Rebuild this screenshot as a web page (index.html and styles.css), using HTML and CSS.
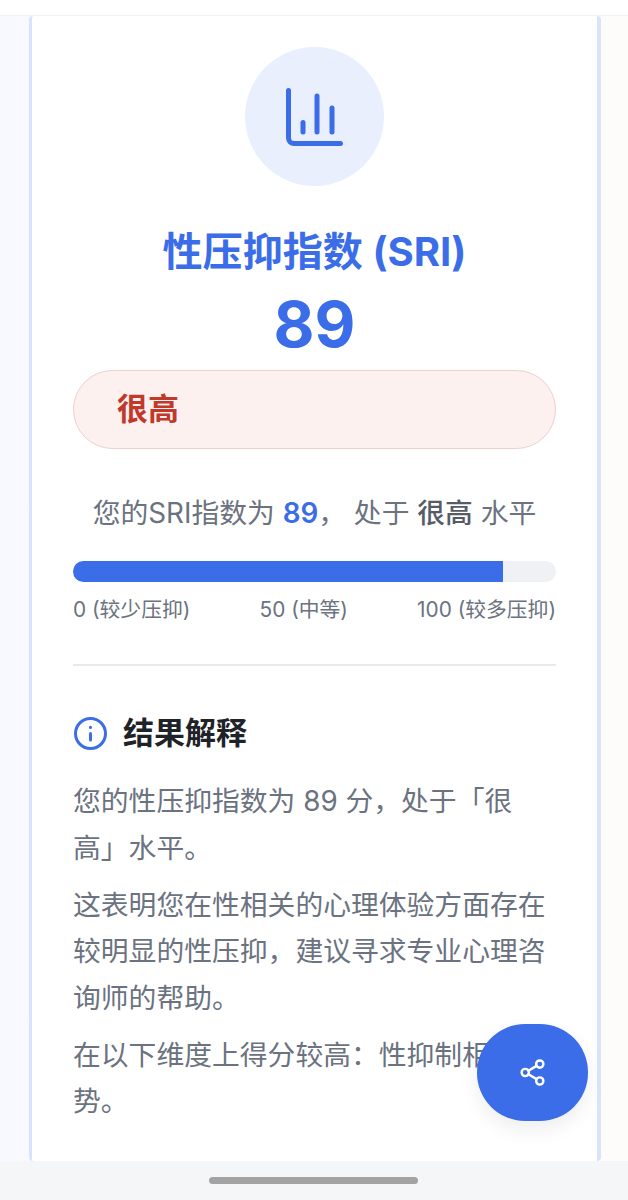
FILE: index.html
```html
<!DOCTYPE html>
<html lang="zh-CN">
<head>
    <title>性压抑指数 (SRI)</title>
    <meta charset="utf-8">
    <meta name="viewport" content="width=device-width, initial-scale=1">
    <link rel="stylesheet" href="styles.css">
</head>
<body>
    <div class="topbar"></div>
    <main class="page">
        <section class="card">
            <div class="score-icon">
                <svg width="64" height="64" viewBox="0 0 64 64" fill="none" stroke="currentColor" stroke-width="5" stroke-linecap="round" stroke-linejoin="round">
                    <path d="M5.5 5.5V53a5.5 5.5 0 0 0 5.5 5.5H57.5"/>
                    <path d="M20 37.5V47"/>
                    <path d="M34 11V47"/>
                    <path d="M49 23V47"/>
                </svg>
            </div>
            <h1 class="score-title">性压抑指数 (SRI)</h1>
            <div class="score-value">89</div>
            <div class="level-pill">很高</div>
            <p class="summary">您的SRI指数为 <span class="hl-num">89</span>， 处于 <strong>很高</strong> 水平</p>
            <div class="track"><div class="fill" style="width: 89%"></div></div>
            <div class="scale">
                <span>0 (较少压抑)</span>
                <span>50 (中等)</span>
                <span>100 (较多压抑)</span>
            </div>
            <hr class="divider">
            <h2 class="section-title">
                <svg width="33" height="33" viewBox="0 0 33 33" fill="none" stroke="currentColor" stroke-width="3" stroke-linecap="round">
                    <circle cx="16.5" cy="16.5" r="15"/>
                    <path d="M16.5 16.5V23"/>
                    <path d="M16.5 10.2V10.4"/>
                </svg>
                <span>结果解释</span>
            </h2>
            <div class="explain">
                <p class="para">您的性压抑指数为 89 分，处于「很高」水平。</p>
                <p class="para">这表明您在性相关的心理体验方面存在较明显的性压抑，建议寻求专业心理咨询师的帮助。</p>
                <p class="para">在以下维度上得分较高：性抑制相关优势。</p>
            </div>
        </section>
    </main>
    <div class="bottombar"><div class="home-bar"></div></div>
    <button class="fab" type="button" aria-label="分享">
        <svg width="29" height="29" viewBox="0 0 24 24" fill="none" stroke="currentColor" stroke-width="2" stroke-linecap="round" stroke-linejoin="round">
            <circle cx="18" cy="5" r="3"/>
            <circle cx="6" cy="12" r="3"/>
            <circle cx="18" cy="19" r="3"/>
            <path d="M8.6 13.5l6.8 4"/>
            <path d="M15.4 6.5l-6.8 4"/>
        </svg>
    </button>
</body>
</html>
```

FILE: styles.css
```css
html, body {
    margin: 0;
    height: 100%;
}
body {
    display: flex;
    flex-direction: column;
    height: 1200px;
    overflow: hidden;
    background: linear-gradient(to right, #f7f9fe, #fefcfa);
    font-family: Inter, "Noto Sans CJK SC", sans-serif;
    color: #6b7280;
}
.topbar {
    height: 15px;
    background: #fff;
    border-bottom: 1px solid #f1f2f5;
}
.page {
    flex: 1;
    min-height: 0;
    overflow: hidden;
    padding: 0 27px 0 29px;
}
.card {
    height: 100%;
    box-sizing: border-box;
    padding: 31px 41px 0;
    background: #fff;
    border-left: 3px solid #d9e3fb;
    border-right: 4px solid #d9e3fb;
    border-radius: 4px;
}
.score-icon {
    width: 139px;
    height: 139px;
    margin: 0 auto;
    display: flex;
    align-items: center;
    justify-content: center;
    border-radius: 50%;
    background: #e9effc;
    color: #3b6de8;
}
.score-title {
    margin: 40px 0 0;
    font-size: 40.1px;
    line-height: 52px;
    font-weight: 700;
    text-align: center;
    color: #3b6de8;
}
.score-value {
    margin-top: 8px;
    font-size: 63px;
    line-height: 76px;
    font-weight: 700;
    text-align: center;
    color: #3b6de8;
}
.level-pill {
    height: 79px;
    box-sizing: border-box;
    margin-top: 8px;
    padding-left: 43px;
    line-height: 75px;
    font-size: 31px;
    font-weight: 600;
    color: #c0392b;
    background: #fdf1f0;
    border: 1px solid #efcfcc;
    border-radius: 40px;
}
.summary {
    margin: 42px 0 0;
    font-size: 27.8px;
    line-height: 44px;
    text-align: center;
    white-space: nowrap;
}
.summary strong {
    font-weight: 500;
    color: #555c68;
}
.hl-num {
    font-weight: 600;
    color: #3b6de8;
}
.track {
    height: 21px;
    margin-top: 26px;
    background: #f0f1f4;
    border-radius: 11px;
    overflow: hidden;
}
.fill {
    height: 100%;
    background: #3b6de8;
}
.scale {
    display: flex;
    justify-content: space-between;
    margin-top: 13px;
    font-size: 20.8px;
    line-height: 30px;
}
.divider {
    height: 2px;
    margin: 39px 0 0;
    border: 0;
    background: #e8e9ed;
}
.section-title {
    display: flex;
    align-items: center;
    gap: 16px;
    margin: 43px 0 0;
    font-size: 31px;
    line-height: 48px;
    font-weight: 700;
    color: #1f2329;
}
.section-title svg {
    flex: none;
    margin-left: 1px;
    color: #3b6de8;
}
.explain {
    margin-top: 21px;
    padding-right: 4px;
}
.para {
    margin: 10.5px 0 0;
    font-size: 27.8px;
    line-height: 46.5px;
}
.para:first-child {
    margin-top: 0;
}
.bottombar {
    height: 39px;
    background: #f5f6f8;
    display: flex;
    justify-content: center;
    padding: 16px 2px 0 0;
    box-sizing: border-box;
}
.home-bar {
    width: 209px;
    height: 7px;
    border-radius: 4px;
    background: #a3a3a3;
}
.fab {
    position: fixed;
    left: 477px;
    top: 1024px;
    width: 111px;
    height: 97px;
    padding: 0;
    border: 0;
    border-radius: 48px;
    display: flex;
    align-items: center;
    justify-content: center;
    background: #3b6de8;
    color: #fff;
    box-shadow: 0 8px 20px rgba(0, 0, 0, 0.07);
}
```
